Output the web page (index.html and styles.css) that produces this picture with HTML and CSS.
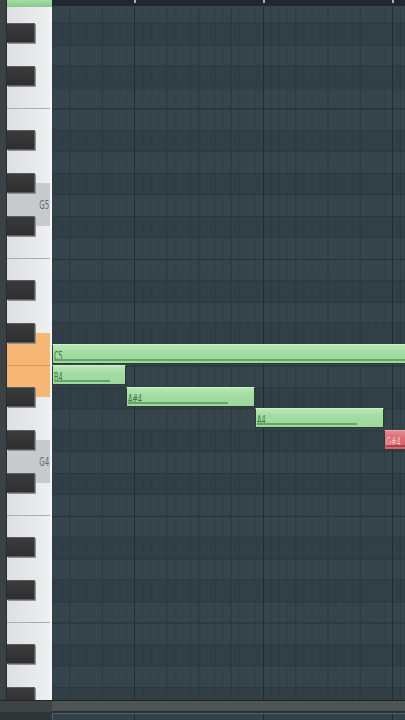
FILE: index.html
```html
<!DOCTYPE html>
<html lang="en">
<head>
  <meta charset="UTF-8">
  <title>Piano roll</title>
  <link rel="stylesheet" href="styles.css">
</head>
<body>

  <div class="app">
    <div class="topbar">
      <div class="strip"></div>
      <div class="kbd-head"></div>
      <div class="ruler">
        <span class="mark" style="left: 82px"></span>
        <span class="mark" style="left: 211px"></span>
        <span class="mark" style="left: 340px"></span>
      </div>
    </div>

    <div class="main">
      <div class="strip"></div>

      <div class="keyboard">
        <div class="keys">
          <div class="w h15 sep"></div>
          <div class="w h2"></div>
          <div class="w h15"></div>
          <div class="w h15 sep"></div>
          <div class="w h2"></div>
          <div class="w h2 root"><span class="lbl">G5</span></div>
          <div class="w h15"></div>
          <div class="w h15 sep"></div>
          <div class="w h2"></div>
          <div class="w h15 hot"></div>
          <div class="w h15 sep hot"></div>
          <div class="w h2"></div>
          <div class="w h2 root"><span class="lbl">G4</span></div>
          <div class="w h15"></div>
          <div class="w h15 sep"></div>
          <div class="w h2"></div>
          <div class="w h15"></div>
          <div class="w h15 sep"></div>
          <div class="w h2"></div>
          <div class="w h2"></div>

          <!-- black keys: top = row index * 21.42 -->
          <div class="b" style="top: 21.92px"></div>
          <div class="b" style="top: 64.76px"></div>
          <div class="b" style="top: 129.02px"></div>
          <div class="b" style="top: 171.86px"></div>
          <div class="b" style="top: 214.7px"></div>
          <div class="b" style="top: 278.96px"></div>
          <div class="b" style="top: 321.8px"></div>
          <div class="b" style="top: 386.06px"></div>
          <div class="b" style="top: 428.9px"></div>
          <div class="b" style="top: 471.74px"></div>
          <div class="b" style="top: 536px"></div>
          <div class="b" style="top: 578.84px"></div>
          <div class="b" style="top: 643.1px"></div>
          <div class="b" style="top: 685.94px"></div>
        </div>
      </div>

      <div class="grid">
        <div class="note" style="top: 337px; left: 0; width: 360px">
          <span class="name">C5</span><i class="vel" style="width: 100%"></i>
        </div>
        <div class="note" style="top: 358.42px; left: 0; width: 74px">
          <span class="name">B4</span><i class="vel" style="width: 56px"></i>
        </div>
        <div class="note" style="top: 379.84px; left: 74px; width: 129px">
          <span class="name">A#4</span><i class="vel" style="width: 100px"></i>
        </div>
        <div class="note" style="top: 401.26px; left: 203px; width: 129px">
          <span class="name">A4</span><i class="vel" style="width: 100px"></i>
        </div>
        <div class="note red" style="top: 422.68px; left: 332px; width: 129px">
          <span class="name">G#4</span><i class="vel" style="width: 100px"></i>
        </div>
      </div>
    </div>

    <div class="scrollbar">
      <div class="sb-left"></div>
      <div class="sb-track"></div>
    </div>

    <div class="events">
      <div class="ev-left"></div>
      <div class="ev-panel"></div>
    </div>
  </div>

</body>
</html>
```

FILE: styles.css
```css
body {
  margin: 0;
  background: #2a3236;
  font-family: "Liberation Sans Narrow", "DejaVu Sans Condensed", sans-serif;
  overflow: hidden;
}

.app {
  width: 405px;
  height: 720px;
  display: flex;
  flex-direction: column;
}

.strip {
  width: 6px;
  flex: none;
  background: #3b4144;
  border-right: 1px solid #272c2f;
}

/* top bar */
.topbar {
  height: 7px;
  display: flex;
  flex: none;
}

.kbd-head {
  width: 45px;
  background: linear-gradient(#a6dda6, #86c886);
}

.ruler {
  flex: 1;
  position: relative;
  background: #1f282c;
  border-bottom: 1px solid #394549;
}

.mark {
  position: absolute;
  top: 0;
  width: 2px;
  height: 3px;
  background: #a7b0b4;
}

/* main area */
.main {
  height: 693px;
  display: flex;
  flex: none;
  overflow: hidden;
}

.keyboard {
  width: 43px;
  flex: none;
  overflow: hidden;
  border-right: 2px solid #f3f5f6;
  background: #e4e7ea;
}

.keys {
  position: relative;
  margin-top: -5.72px;
}

.w {
  box-sizing: border-box;
  position: relative;
  background: linear-gradient(to right, #dde0e3, #e8eaec 70%, #eef0f1);
}

.h15 { height: 32.13px; }
.h2 { height: 42.84px; }

.sep {
  border-top: 1px solid #a9aeb2;
}

.root {
  background: #c7cbce;
}

.hot {
  background: #f6b676;
}

.hot.sep {
  border-top-color: #d8995c;
}

.lbl {
  position: absolute;
  right: 1px;
  top: 50%;
  margin-top: -7px;
  font-size: 12px;
  line-height: 14px;
  color: #62686d;
  transform: scaleX(0.65);
  transform-origin: right center;
}

.b {
  position: absolute;
  left: 0;
  width: 28px;
  height: 20px;
  box-sizing: border-box;
  background: linear-gradient(#3b3b3b, #2f2f2f);
  border: 1px solid #5a5c5e;
  border-left: none;
  border-radius: 0 1px 1px 0;
  box-shadow: 1px 1px 0 #8c9094;
}

/* note grid */
.grid {
  flex: 1;
  position: relative;
  overflow: hidden;
  background-color: #35434b;
  background-image:
    linear-gradient(to right, #222c31 0 1px, transparent 1px),
    linear-gradient(to right, #2c383f 0 1px, transparent 1px),
    linear-gradient(to right, rgba(0, 0, 0, 0.08) 0 1px, transparent 1px),
    linear-gradient(to bottom,
      #243036 0 1px, #36444c 1px 21.42px,
      #2b373e 21.42px 22.42px, #313f47 22.42px 42.84px,
      #2b373e 42.84px 43.84px, #36444c 43.84px 64.26px,
      #2b373e 64.26px 65.26px, #313f47 65.26px 85.68px,
      #2b373e 85.68px 86.68px, #36444c 86.68px 107.1px,
      #2b373e 107.1px 108.1px, #313f47 108.1px 128.52px,
      #2b373e 128.52px 129.52px, #36444c 129.52px 149.94px,
      #263238 149.94px 150.94px, #36444c 150.94px 171.36px,
      #2b373e 171.36px 172.36px, #313f47 172.36px 192.78px,
      #2b373e 192.78px 193.78px, #36444c 193.78px 214.2px,
      #2b373e 214.2px 215.2px, #313f47 215.2px 235.62px,
      #2b373e 235.62px 236.62px, #36444c 236.62px 257.04px);
  background-size: 129px 100%, 32.25px 100%, 8.0625px 100%, 100% 257.04px;
  background-position: 82px 0, 82px 0, 82px 0, 0 101.38px;
}

.note {
  position: absolute;
  height: 20px;
  box-sizing: border-box;
  background: linear-gradient(#b6e8b6, #a2dca2 40%, #9cd89c);
  border: 1px solid #2c3b33;
  border-top-color: #cdf1cd;
  border-radius: 1px;
}

.name {
  display: inline-block;
  margin: 1px 0 0 1px;
  font-size: 12px;
  line-height: 11px;
  color: #3f7047;
  transform: scaleX(0.6);
  transform-origin: left center;
}

.vel {
  position: absolute;
  left: 1px;
  bottom: 2px;
  height: 2px;
  background: #66a46e;
}

.note.red {
  background: linear-gradient(#e6888e, #d96c75 40%, #d4646e);
  border-top-color: #f0a8ab;
}

.note.red .name {
  color: #f6c8ca;
}

.note.red .vel {
  background: #a9414e;
}

/* bottom */
.scrollbar {
  height: 12px;
  display: flex;
  flex: none;
  border-top: 1px solid #1e272a;
  box-sizing: border-box;
}

.sb-left {
  width: 52px;
  background: #3e4446;
}

.sb-track {
  flex: 1;
  background: #4d5452;
  border-bottom: 1px solid #252d30;
}

.events {
  flex: 1;
  display: flex;
}

.ev-left {
  width: 52px;
  background: #2f3538;
}

.ev-panel {
  flex: 1;
  margin-top: 1px;
  border-top: 1px solid #566166;
  border-left: 1px solid #566166;
  background-color: #33414a;
  background-image: linear-gradient(to right, #1e282d 0 1px, transparent 1px);
  background-size: 129px 100%;
  background-position: 81px 0;
}
```
